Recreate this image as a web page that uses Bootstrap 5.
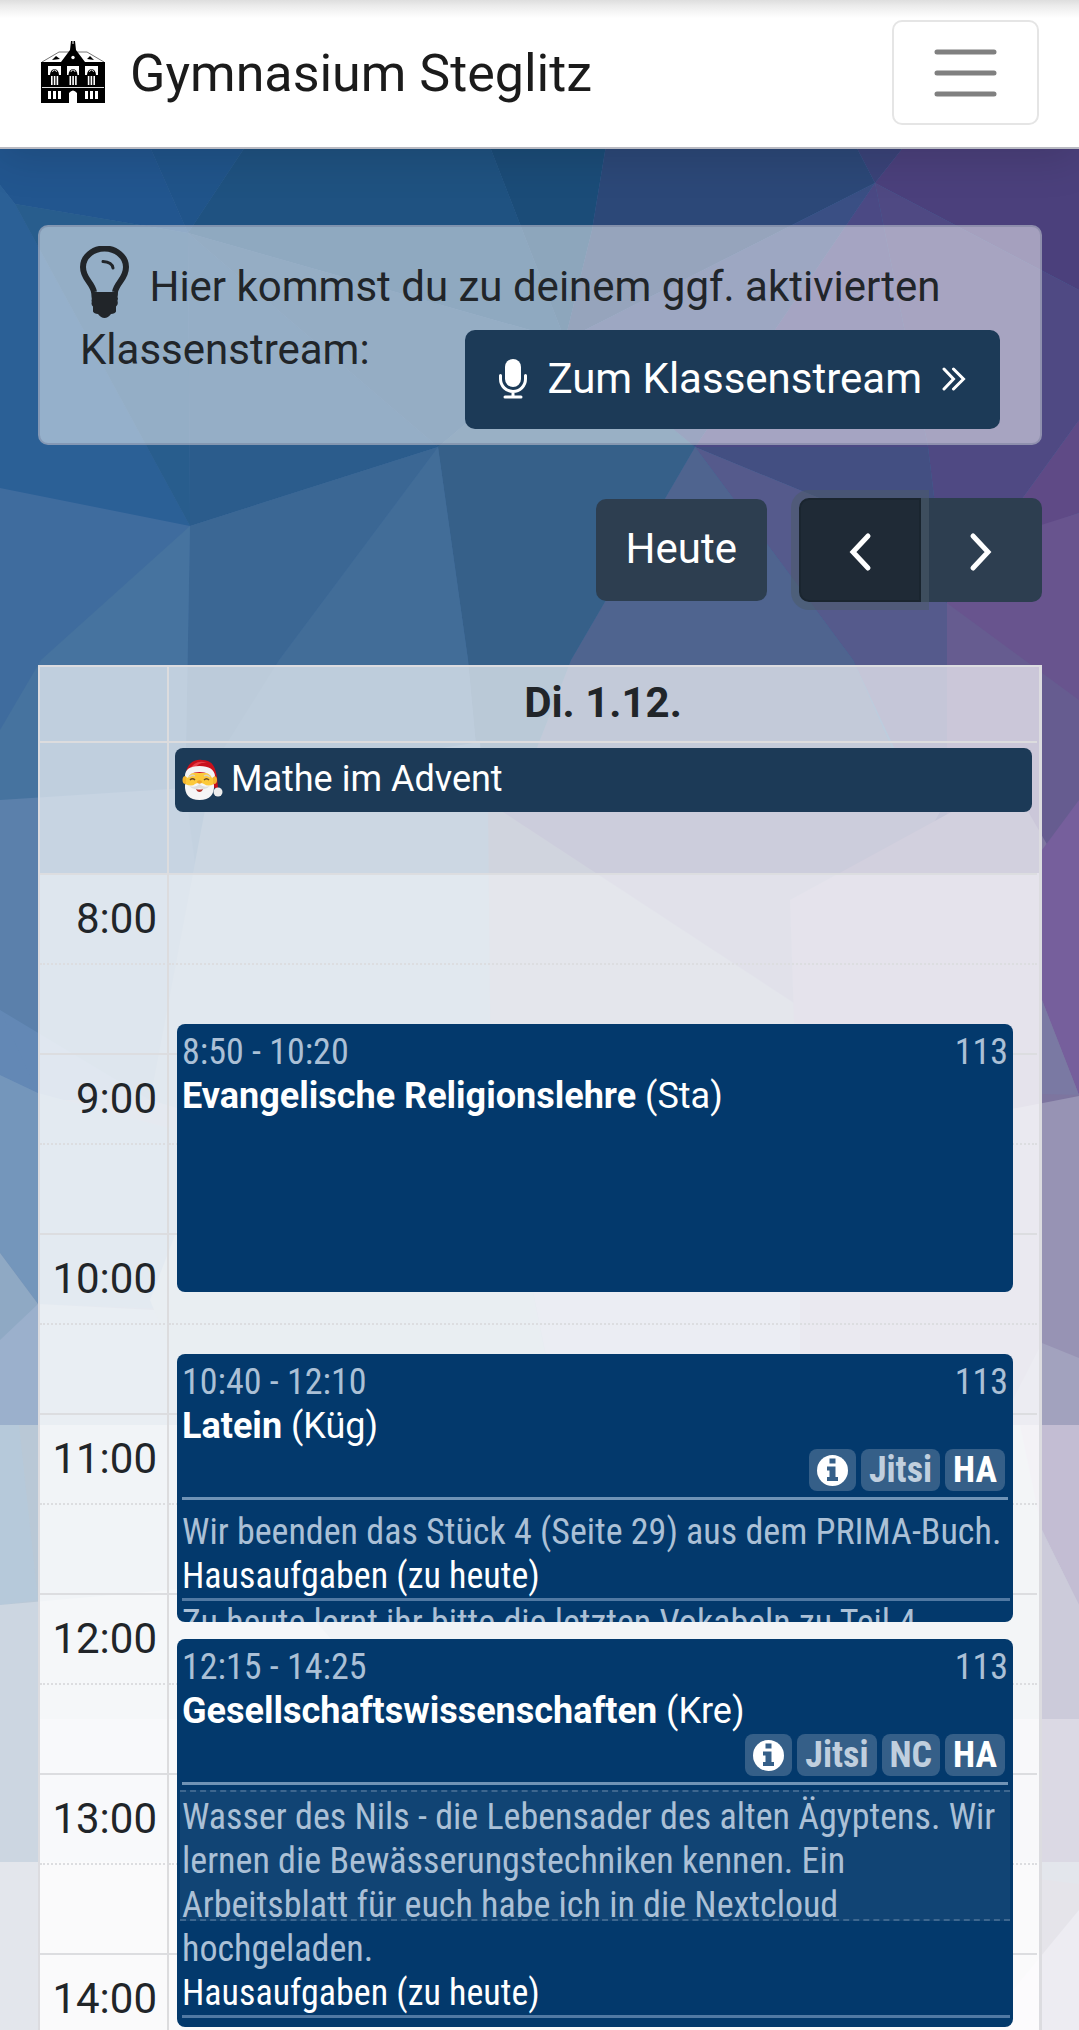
<!DOCTYPE html>
<html lang="de">
<head>
<meta charset="utf-8">
<meta name="viewport" content="width=device-width, initial-scale=1">
<title>Gymnasium Steglitz</title>
<link href="https://cdn.jsdelivr.net/npm/bootstrap@5.3.0/dist/css/bootstrap.min.css" rel="stylesheet">
<style>
  body { font-family: Roboto, "Liberation Sans", sans-serif; font-size: 42px; line-height: 63px; color: #212529; background: #e6e7ee; }
  .backdrop { position: absolute; inset: 0; width: 100%; height: 100%; z-index: -1; }

  /* top bar */
  .topbar { padding: 20px 40px 22px 41px; border-bottom: 2px solid #b9bac2; background: linear-gradient(#dedede, #ececec 6px, #fff 18px); box-shadow: 0 8px 42px rgba(0,0,0,.14); }
  .topbar .navbar-brand { font-size: 52px; line-height: 78px; gap: 25px; color: #1b1b1b; }
  .topbar .navbar-brand span { padding-top: 2px; }
  .topbar .navbar-toggler { width: 147px; height: 105px; border: 2px solid #e5e5e5; border-radius: 10px; }

  .page { padding: 76px 37px 0 38px; }

  /* hint box */
  .hint { padding: 19px 40px 14px; border: 2px solid rgba(100,110,140,.35); border-radius: 10px; background: rgba(255,255,255,.5); }
  .hint .bulb { vertical-align: -17px; margin-right: 10px; }
  .btn-stream { margin-top: 12px; height: 99px; padding: 0 33px 2px; border-radius: 10px; gap: 20px; font-size: 42px; line-height: 63px; color: #fff; background: #1c3a57; }
  .btn-stream:hover { color: #fff; background: #16304a; }

  /* calendar toolbar */
  .cal-tools { padding: 53px 0 63px; gap: 32px; }
  .cal-tools .btn { height: 104px; padding: 0; border: 0; border-radius: 10px; font-size: 42px; line-height: 63px; color: #fff; background: #2d3e50; }
  .cal-tools .btn-today { height: 102px; padding: 0 30px 4px; }
  .cal-tools .btn-group .btn { width: 122px; padding-bottom: 3px; }
  .cal-tools .btn-group .btn-prev { z-index: 2; border-radius: 10px 0 0 10px; background: #1f2a36; border: 2px solid #1a252f; box-shadow: 0 0 0 8px rgba(76,91,106,.55); }
  .cal-tools .btn-group .btn-next { border-radius: 0 10px 10px 0; }

  /* calendar */
  .cal { border: 2px solid #dcdce0; border-width: 2px 3px 0 2px; min-height: 0; }
  .cal table { width: 100%; table-layout: fixed; border-collapse: separate; border-spacing: 0; }
  .cal .axis { width: 129px; border-right: 2px solid #dcdcde; }
  .cal-head { background: rgba(255,255,255,.66); padding-right: 2px; }
  .cal-head th { height: 74px; padding-bottom: 4px; text-align: center; vertical-align: middle; }
  .cal-head td { height: 132px; padding: 5px 5px 0 6px; vertical-align: top; border-top: 2px solid #dcdcde; }
  .allday { gap: 8px; height: 64px; padding: 0 7px 2px; border-radius: 8px; font-size: 36px; line-height: 60px; color: #fff; background: #1c3a57; }
  .cal-body { display: grid; overflow: hidden; min-height: 0; background: rgba(255,255,255,.8); padding-right: 2px; }
  .slots, .day-events { grid-area: 1 / 1; }
  .slots td, .slots th { height: 90px; padding: 0 10px 2px 0; text-align: right; vertical-align: middle; font-weight: 400; border-top: 2px solid #dcdde0; }
  .slots .half > * { border-top-style: dotted; }
  .day-events { display: grid; grid-template-rows: repeat(78, 15px); margin: 0 24px 0 137px; }
  .lesson { position: relative; overflow: hidden; margin: 1px 0; padding: 6px 5px 0; border-radius: 8px; font-size: 36px; line-height: 44px; color: #fff; background: #03396c; }
  .narrow { font-family: "Roboto Condensed", "Liberation Sans Narrow", Roboto, sans-serif; }
  .soft { color: #abc0d6; }
  .tags { gap: 5px; margin: 1px 3px 6px 0; }
  .tag { height: 42px; padding: 0 8px; border-radius: 8px; line-height: 42px; font-weight: 700; background: #355f88; }
  .tag.soft { color: #c0cfde; }
  .rule { border-top: 3px solid #6f93b6; padding-top: 10px; }
  .homework { border-top: 3px solid #5179a3; margin-right: -2px; }
  .pause { position: absolute; left: 3px; right: 3px; top: 151px; height: 131px; border: 2px dashed #3e678f; border-width: 2px 0; background: rgba(255,255,255,.06); }
</style>
<script src="https://cdn.jsdelivr.net/npm/bootstrap@5.3.0/dist/js/bootstrap.bundle.min.js"></script>
</head>
<body class="vh-100 d-flex flex-column overflow-hidden position-relative">

<svg class="backdrop" viewBox="0 0 1079 2030" preserveAspectRatio="none" aria-hidden="true">
  <rect width="1079" height="2030" fill="#3f6c9e"/>
  <path fill="#7f93b4" d="M0 1000H1079V1425H0z"/>
  <path fill="#6388b5" d="M0 800H185V1100H0z"/>
  <!-- upper facets -->
  <path fill="#22568f" d="M0 0H110L150 147 188 233 15 204 0 185z"/>
  <path fill="#20548a" d="M110 0H300L245 147 188 233 150 147z"/>
  <path fill="#1f5281" d="M300 0H460L490 147 565 340 188 233 245 147z"/>
  <path fill="#1b4c78" d="M460 0H630L592 230 565 340 490 147z"/>
  <path fill="#2c4878" d="M630 0H780L875 183 565 340 592 230z"/>
  <path fill="#3a4379" d="M780 0H1020L875 183z"/>
  <path fill="#4b407c" d="M1020 0H1079V290L875 183z"/>
  <path fill="#2b6096" d="M0 185 15 204 190 526 0 488z"/>
  <path fill="#285d8d" d="M15 204 188 233 190 526z"/>
  <path fill="#2b5c8c" d="M188 233 438 447 190 526z"/>
  <path fill="#2b5a88" d="M188 233 565 340 438 447z"/>
  <path fill="#33618a" d="M565 340 695 447H438z"/>
  <path fill="#3a4f84" d="M565 340 875 183 695 447z"/>
  <path fill="#4b4984" d="M875 183 928 447H695z"/>
  <path fill="#4f4983" d="M875 183 1079 290V420L947 603 928 447z"/>
  <path fill="#434f82" d="M695 447H928L947 603 819 498z"/>
  <path fill="#5f4a86" d="M1079 420V513L947 560V603z"/>
  <path fill="#555a8c" d="M695 447 819 498 947 603V860L853 660z"/>
  <path fill="#4f648f" d="M695 447 853 660 947 873H488L571 660z"/>
  <path fill="#366089" d="M438 447H695L571 660 488 873 468 660z"/>
  <path fill="#426d98" d="M438 447 468 660 488 873 185 800 279 660z"/>
  <path fill="#3b6794" d="M190 526 438 447 279 660 185 810z"/>
  <path fill="#46739f" d="M190 526 185 810 0 800V730L41 660z"/>
  <path fill="#68548e" d="M1079 513V900L947 760V555z"/>
  <path fill="#665c90" d="M947 603 1079 700V900L947 873z"/>
  <!-- middle facets -->
  <path fill="#5b80ab" d="M0 800 185 788 282 873 150 1100 0 1010z"/>
  <path fill="#547da5" d="M185 788 480 742 488 873 357 873 205 940z"/>
  <path fill="#6a8bad" d="M205 810 500 810 492 1200 150 1100z"/>
  <path fill="#77809f" d="M488 800 853 800 880 1200H492z"/>
  <path fill="#6b6c98" d="M500 810 947 800 820 1020z"/>
  <path fill="#7d759f" d="M790 900 1010 780 1079 900V1100L800 1200z"/>
  <path fill="#765f9c" d="M1079 800V1095L1042 1000V850z"/>
  <path fill="#6388b5" d="M0 1010 38 1093 0 1075z"/>
  <path fill="#7496bb" d="M0 1075 38 1093 250 1150 200 1310 38 1304 0 1253z"/>
  <path fill="#8fa9c4" d="M38 1304 0 1253V1425H500L350 1320z"/>
  <path fill="#9bb0cc" d="M0 1340 38 1304V1425H0z"/>
  <path fill="#90a8bd" d="M250 1040 492 1090 560 1425H200L150 1300z"/>
  <path fill="#9aa5c1" d="M492 1090 800 1100V1425H560z"/>
  <path fill="#7a79a3" d="M1042 1000 1079 1095 1042 1094z"/>
  <path fill="#9793b4" d="M800 1150 1079 1096V1425H800z"/>
  <path fill="#a2a2be" d="M1042 1343 1079 1358V1425H1000z"/>
  <!-- lower facets -->
  <path fill="#b9c8d6" d="M0 1425H560V1719H0z"/>
  <path fill="#c4cad8" d="M560 1425H1079V1719H560z"/>
  <path fill="#b6c9da" d="M0 1425H19L38 1600 0 1605z"/>
  <path fill="#ccd6e1" d="M0 1605 280 1580 400 1719V1862H0z"/>
  <path fill="#c3bdd3" d="M1020 1425H1079V1605L1042 1530z"/>
  <path fill="#cccbda" d="M1042 1530 1079 1605V1719H1042z"/>
  <path fill="#d9e2e9" d="M38 1719 H600 L500 1862H38z"/>
  <path fill="#dbd9e4" d="M600 1719H1079V1876L700 1862H500z"/>
  <path fill="#e3e6ec" d="M0 1862H1079V2030H0z"/>
  <path fill="#e5e4ea" d="M1030 1878 1079 1884V2030H1000z"/>
  <path fill="#edecf2" d="M1079 1910V2030H980z"/>
</svg>

<nav class="navbar topbar flex-nowrap justify-content-between">
  <a class="navbar-brand d-flex align-items-center m-0 p-0" href="#">
    <svg width="64" height="63" viewBox="0 0 64 63" aria-hidden="true">
      <path d="M1 21 18 11H46L63 21" fill="#fff" stroke="#777"/>
      <path d="M0 21H20L29 9 30 0h1.500v3h1V0H34l1 9 9 12H64V62H36V52q-4-5-8 0V62H0z"/>
      <path d="M11 19l4-4 4 3zM46 18l3-3 4 4z"/>
      <circle cx="32" cy="16.500" r="1.700" fill="#fff"/>
      <g fill="#fff">
        <path d="M7 25H20v9H7zM26 25H38v9H26zM44 25H57v9H44z"/>
        <path d="M10 35h1.600v9H10zM12.800 35h1.600v9h-1.600zM15.600 35h1.600v9h-1.600zM28.500 35h1.600v9h-1.600zM31.300 35h1.600v9h-1.600zM34.100 35h1.600v9h-1.600zM46.800 35h1.600v9h-1.600zM49.600 35h1.600v9h-1.600zM52.400 35H54v9h-1.600z"/>
        <path d="M7 50h3v8H7zM12 50h3v8h-3zM17 50h3v8h-3zM44 50h3v8h-3zM49 50h3v8h-3zM54 50h3v8h-3z"/>
      </g>
      <path d="M9 34a4.500 6 0 0 1 9 0zM27.500 34a4.500 6 0 0 1 9 0zM46 34a4.500 6 0 0 1 9 0z"/>
      <path d="M11.500 31a2 2 0 0 1 4 0M30 31a2 2 0 0 1 4 0M48.500 31a2 2 0 0 1 4 0M1 46.500H63" stroke="#ddd" fill="none"/>
    </svg>
    <span>Gymnasium Steglitz</span>
  </a>
  <button class="navbar-toggler p-0 d-flex align-items-center justify-content-center" type="button" aria-label="Menü öffnen">
    <svg width="64" height="50" viewBox="0 0 64 50" aria-hidden="true"><path d="M3 4H60M3 25H60M3 46H60" stroke="#808080" stroke-width="5" stroke-linecap="round"/></svg>
  </button>
</nav>

<main class="page d-flex flex-column flex-grow-1 overflow-hidden">
  <section class="hint clearfix flex-shrink-0">
    <svg class="bulb" width="49" height="72" viewBox="0 0 49 72" aria-hidden="true">
      <path d="M14 46C12 36 3 33 3 21a21.500 18.500 0 0 1 43 0C46 33 37 36 35 46" fill="none" stroke="#212529" stroke-width="6"/>
      <path d="M23 15.500Q32 16 33 22" fill="none" stroke="#212529" stroke-width="3" stroke-linecap="round"/>
      <path d="M11 46H38q0 3-.5 5 1 1.500 0 3.500.5 2 0 4-.5 1-1.500 2v5q-1 2-5 2.500-3 4-6.500 4t-6.500-4q-4-.5-5-2.500v-5q-1.500-1-1.500-3 .5-1.500 0-3 .5-2 0-4 0-2-.5-4.500z" fill="#212529"/>
    </svg>
    Hier kommst du zu deinem ggf. aktivierten Klassenstream:
    <a class="btn btn-stream float-end d-flex align-items-center" href="#">
      <svg width="28" height="40" viewBox="0 0 28 40" aria-hidden="true">
        <rect x="6" width="16" height="28" rx="8" fill="#fff"/>
        <path d="M1.500 16.500V20a12.500 12.500 0 0 0 25 0V16.500M14 33v4M6 38H22" fill="none" stroke="#fff" stroke-width="3" stroke-linecap="round"/>
      </svg>
      <span>Zum Klassenstream</span>
      <svg width="24" height="24" viewBox="0 0 24 24" aria-hidden="true"><path d="M2 2 11.500 12 2 22M11.500 2 21.500 12 11.500 22" fill="none" stroke="#fff" stroke-width="3" stroke-linecap="round"/></svg>
    </a>
  </section>

  <div class="cal-tools d-flex justify-content-end align-items-center flex-shrink-0">
    <button class="btn btn-today" type="button">Heute</button>
    <div class="btn-group" role="group" aria-label="Tag wechseln">
      <button class="btn btn-prev" type="button" aria-label="Zurück"><svg width="24" height="40" viewBox="0 0 24 40" aria-hidden="true"><path d="M20 4 5 20 20 36" fill="none" stroke="#fff" stroke-width="5" stroke-linecap="round"/></svg></button>
      <button class="btn btn-next" type="button" aria-label="Vor"><svg width="24" height="40" viewBox="0 0 24 40" aria-hidden="true"><path d="M4 4 19 20 4 36" fill="none" stroke="#fff" stroke-width="5" stroke-linecap="round"/></svg></button>
    </div>
  </div>

  <section class="cal d-flex flex-column flex-grow-1">
    <div class="cal-head flex-shrink-0">
      <table>
        <thead><tr><th class="axis"></th><th>Di. 1.12.</th></tr></thead>
        <tbody><tr><td class="axis"></td><td>
          <div class="allday d-flex align-items-center">
            <svg width="41" height="41" viewBox="0 0 41 41" aria-hidden="true">
              <path d="M4 15C5 3 14 0 20 1 32 1 35 10 36 30L31 28 30 15z" fill="#c8101b"/>
              <path d="M9 8Q16 0 25 4 17 3 13 9z" fill="#e8414a"/>
              <ellipse cx="3.500" cy="21" rx="3" ry="4" fill="#f3b52f"/><ellipse cx="32" cy="21" rx="3" ry="4" fill="#f3b52f"/>
              <path d="M4 14H31V30H4z" fill="#fcc93a"/>
              <path d="M3 17Q3 7 17.500 7T33 17L30 19Q28 13 17.500 13T6 19z" fill="#f4f4f4"/>
              <path d="M3 25Q10 28 13 25L17.500 23 22 25Q26 28 32 25 33 41 17.500 41T3 25z" fill="#f6f6f6"/>
              <path d="M7 27Q14 29 17.500 25 21 29 28 27 23 32 17.500 29 12 32 7 27z" fill="#dedede"/>
              <path d="M14 30Q17.500 31 21 30 20 33 17.500 33T14 30z" fill="#b5352d"/>
              <path d="M8 21Q10.500 18.500 13 21M22 21Q24.500 18.500 27 21" stroke="#6b4a22" stroke-width="1.500" fill="none"/>
              <path d="M7 18Q10 15 13 17M22 17Q25 15 28 18" stroke="#d8d2c4" stroke-width="1.500" fill="none"/>
              <ellipse cx="17.500" cy="23" rx="2.500" ry="1.800" fill="#f0a52a"/>
              <circle cx="36" cy="33" r="4.500" fill="#ececec"/>
            </svg>
            <span>Mathe im Advent</span>
          </div>
        </td></tr></tbody>
      </table>
    </div>

    <div class="cal-body flex-grow-1">
      <table class="slots">
        <tbody>
          <tr><th class="axis" scope="row">8:00</th><td></td></tr>
          <tr class="half"><td class="axis"></td><td></td></tr>
          <tr><th class="axis" scope="row">9:00</th><td></td></tr>
          <tr class="half"><td class="axis"></td><td></td></tr>
          <tr><th class="axis" scope="row">10:00</th><td></td></tr>
          <tr class="half"><td class="axis"></td><td></td></tr>
          <tr><th class="axis" scope="row">11:00</th><td></td></tr>
          <tr class="half"><td class="axis"></td><td></td></tr>
          <tr><th class="axis" scope="row">12:00</th><td></td></tr>
          <tr class="half"><td class="axis"></td><td></td></tr>
          <tr><th class="axis" scope="row">13:00</th><td></td></tr>
          <tr class="half"><td class="axis"></td><td></td></tr>
          <tr><th class="axis" scope="row">14:00</th><td></td></tr>
        </tbody>
      </table>

      <!-- one grid row stands for five minutes, counted from 8:00 -->
      <div class="day-events">
        <article class="lesson" style="grid-row: 11 / 29">
          <div class="narrow soft d-flex justify-content-between"><span>8:50 - 10:20</span><span>113</span></div>
          <div><strong>Evangelische Religionslehre</strong> (Sta)</div>
        </article>

        <article class="lesson" style="grid-row: 33 / 51">
          <div class="narrow soft d-flex justify-content-between"><span>10:40 - 12:10</span><span>113</span></div>
          <div><strong>Latein</strong> (Küg)</div>
          <div class="tags narrow d-flex justify-content-end">
            <span class="tag d-flex align-items-center"><svg width="31" height="31" viewBox="0 0 31 31" role="img" aria-label="Info"><circle cx="15.500" cy="15.500" r="15.500" fill="#fff"/><path d="M12.500 3.500h6v5h-6zM10 11.500h8.500V22H21v4H10v-4h2.500v-6.500H10z" fill="#355f88"/></svg></span>
            <span class="tag soft">Jitsi</span><span class="tag">HA</span>
          </div>
          <div class="rule narrow soft">Wir beenden das Stück 4 (Seite 29) aus dem PRIMA-Buch.</div>
          <div class="narrow">Hausaufgaben (zu heute)</div>
          <div class="homework narrow soft">Zu heute lernt ihr bitte die letzten Vokabeln zu Teil 4</div>
        </article>

        <article class="lesson" style="grid-row: 52 / 78">
          <div class="pause"></div>
          <div class="position-relative">
            <div class="narrow soft d-flex justify-content-between"><span>12:15 - 14:25</span><span>113</span></div>
            <div><strong>Gesellschaftswissenschaften</strong> (Kre)</div>
            <div class="tags narrow d-flex justify-content-end">
              <span class="tag d-flex align-items-center"><svg width="31" height="31" viewBox="0 0 31 31" role="img" aria-label="Info"><circle cx="15.500" cy="15.500" r="15.500" fill="#fff"/><path d="M12.500 3.500h6v5h-6zM10 11.500h8.500V22H21v4H10v-4h2.500v-6.500H10z" fill="#355f88"/></svg></span>
              <span class="tag soft">Jitsi</span><span class="tag soft">NC</span><span class="tag">HA</span>
            </div>
            <div class="rule narrow soft">Wasser des Nils - die Lebensader des alten Ägyptens. Wir lernen die Bewässerungstechniken kennen. Ein Arbeitsblatt für euch habe ich in die Nextcloud hochgeladen.</div>
            <div class="narrow">Hausaufgaben (zu heute)</div>
            <div class="homework"></div>
          </div>
        </article>
      </div>
    </div>
  </section>
</main>
</body>
</html>
